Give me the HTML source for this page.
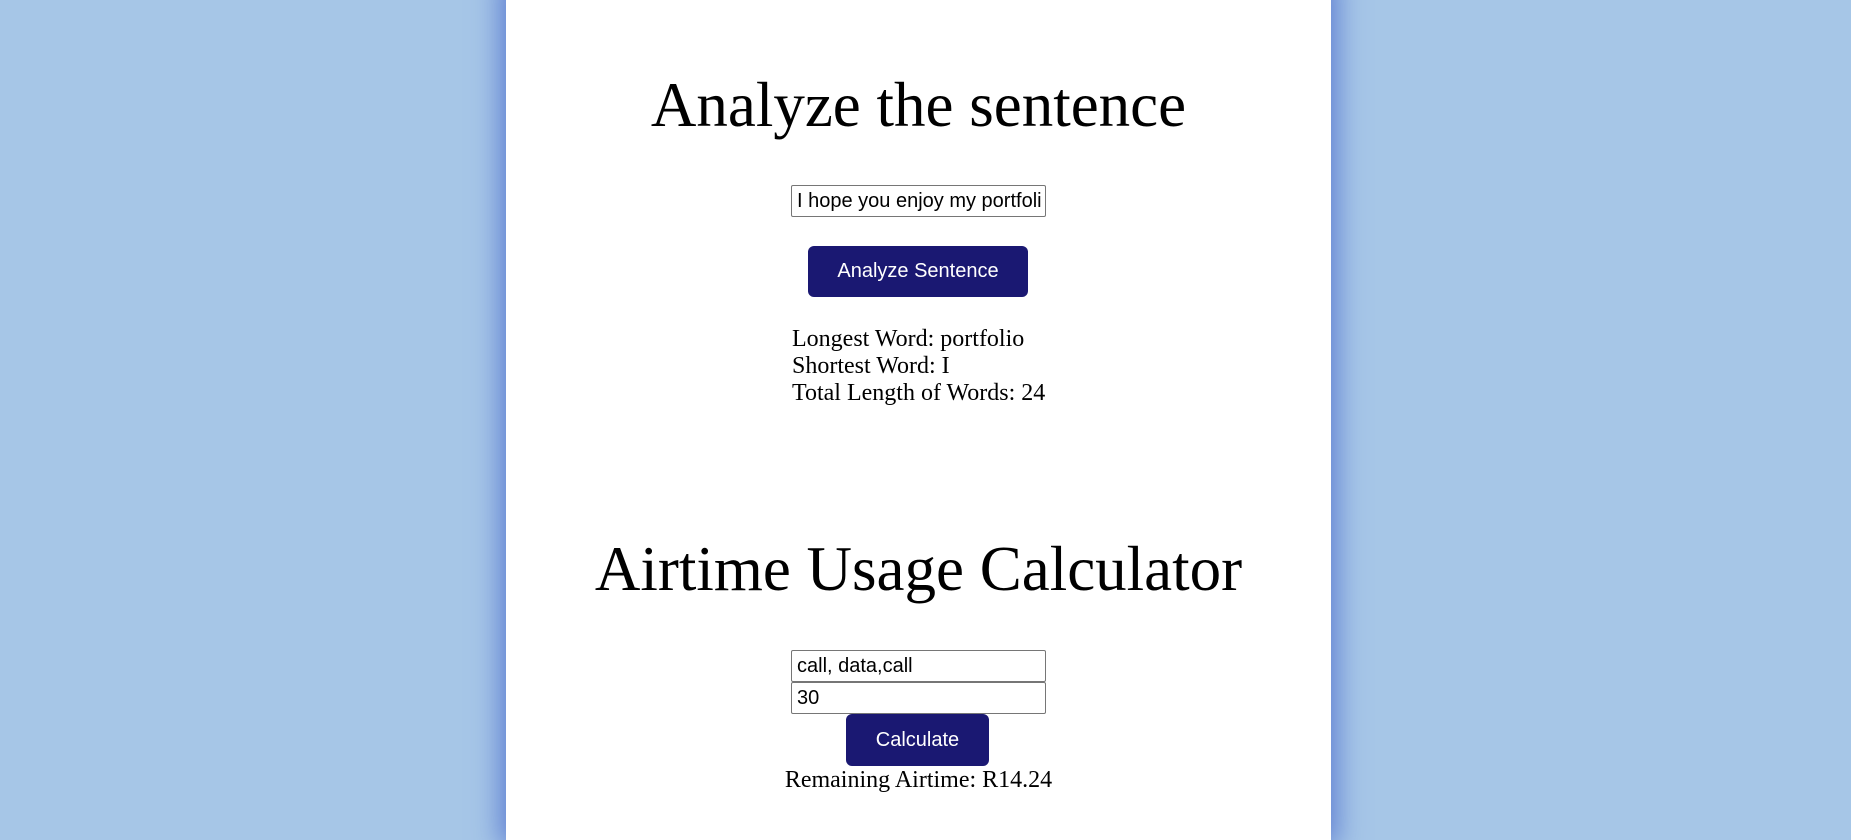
<!DOCTYPE html>
<html><head><meta charset="utf-8"><style>
html,body{margin:0;padding:0;}
body{width:1851px;height:799px;background:#a6c6e7;overflow:hidden;position:relative;font-family:"Liberation Serif",serif;}
.panel{position:absolute;left:506px;top:-20px;width:825px;height:860px;background:#fff;box-shadow:0 0 26px 6px #5f7fd2;}
h1{position:absolute;margin:0;font-weight:normal;font-size:63px;line-height:63px;width:825px;left:506px;text-align:center;color:#000;}
.inp{position:absolute;left:791px;width:253px;height:30px;border:1px solid #767676;border-radius:2px;background:#fff;box-sizing:content-box;font-family:"Liberation Sans",sans-serif;font-size:20px;line-height:30px;padding:0;overflow:hidden;white-space:nowrap;}
.inp span{padding-left:5px;}
.btn{position:absolute;background:#1a1872;color:#fff;border-radius:6px;font-family:"Liberation Sans",sans-serif;font-size:20px;text-align:center;}
.res{position:absolute;font-size:24px;line-height:27px;}
</style></head><body>
<div class="panel"></div>
<h1 style="top:74px;">Analyze the sentence</h1>
<div class="inp" style="top:185px;"><span>I hope you enjoy my portfoli</span></div>
<div class="btn" style="left:808px;top:246px;width:220px;height:51px;line-height:51px;">Analyze Sentence</div>
<div class="res" style="left:792px;top:326px;">Longest Word: portfolio<br>Shortest Word: I<br>Total Length of Words: 24</div>
<h1 style="top:538px;">Airtime Usage Calculator</h1>
<div class="inp" style="top:650px;"><span>call, data,call</span></div>
<div class="inp" style="top:682px;"><span>30</span></div>
<div class="btn" style="left:846px;top:714px;width:143px;height:52px;line-height:52px;">Calculate</div>
<div class="res" style="left:506px;width:825px;text-align:center;top:767px;">Remaining Airtime: R14.24</div>
</body></html>
